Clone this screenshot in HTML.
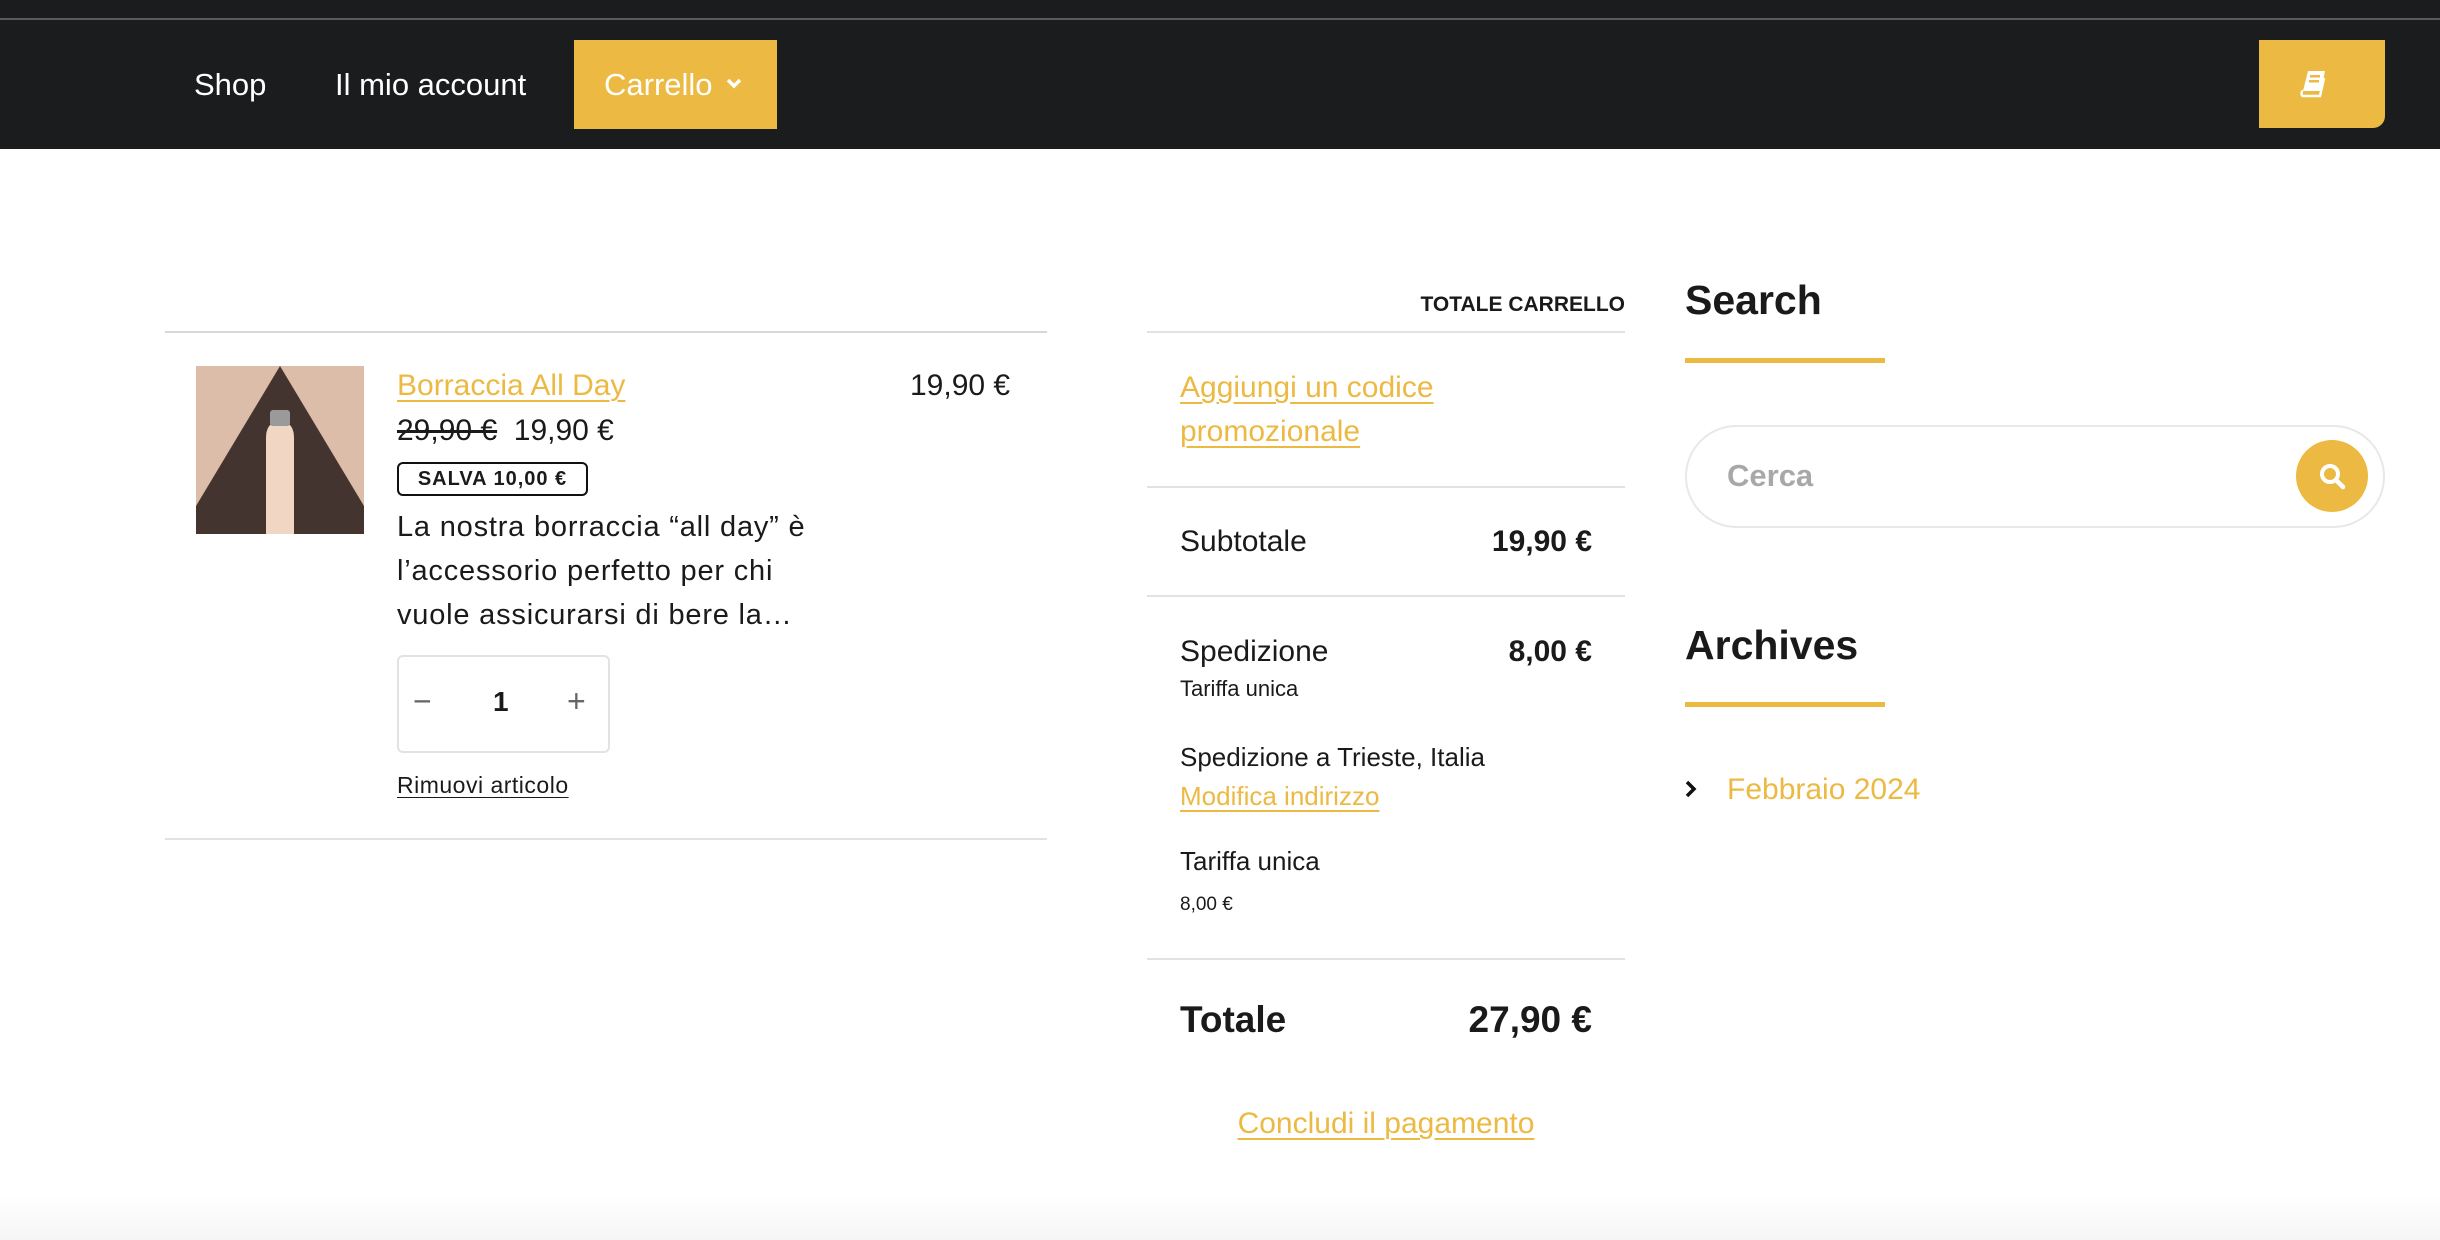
<!DOCTYPE html>
<html><head><meta charset="utf-8"><style>
*{margin:0;padding:0;box-sizing:border-box}
body{width:2440px;height:1240px;overflow:hidden;background:#fff;font-family:"Liberation Sans",sans-serif;color:#1a1a1a;position:relative}
.a{position:absolute;white-space:nowrap}
.y{color:#ecb942}
.u{text-decoration:underline;text-underline-offset:5px;text-decoration-thickness:2px}
.ln{position:absolute;height:2px;background:#e2e2e2}
</style></head><body>
<div class="a" style="left:0;top:0;width:2440px;height:149px;background:#1b1c1e"></div>
<div class="a" style="left:0;top:18px;width:2440px;height:2px;background:#5a5b5e"></div>
<div class="a" style="left:194px;top:67px;font-size:31px;color:#fff">Shop</div>
<div class="a" style="left:335px;top:67px;font-size:31px;color:#fff">Il mio account</div>
<div class="a" style="left:574px;top:40px;width:203px;height:89px;background:#ecb942"></div>
<div class="a" style="left:604px;top:67px;font-size:31px;color:#fff">Carrello</div>
<svg class="a" style="left:725px;top:77px" width="18" height="14" viewBox="0 0 18 14"><path d="M3 3l6 6 6-6" stroke="#fff" stroke-width="3.5" fill="none"/></svg>
<div class="a" style="left:2259px;top:40px;width:126px;height:88px;background:#ecb942;border-bottom-right-radius:12px"></div>
<svg class="a" style="left:2299px;top:69px" width="30" height="30" viewBox="0 0 30 30"><path d="M9 2h17l-4 20H4z" fill="#fff"/><path d="M4 22c-2 0-2 5 0 5h17l4-18" stroke="#fff" stroke-width="2.5" fill="none"/><rect x="11" y="6" width="10" height="2.5" fill="#ecb942"/><rect x="10" y="11" width="10" height="2.5" fill="#ecb942"/></svg>

<div class="ln" style="left:165px;top:331px;width:882px;background:#d8d8d8"></div>
<svg class="a" style="left:196px;top:366px" width="168" height="168" viewBox="0 0 168 168"><rect width="168" height="168" fill="#dcbdaa"/><path d="M84 0L0 140V168H168V140z" fill="#433430"/><path d="M70 168V72q0-14 10-16h8q10 2 10 16V168z" fill="#f1d6c4"/><rect x="74" y="44" width="20" height="16" rx="3" fill="#9a9a9a"/></svg>
<div class="a y u" style="left:397px;top:369px;font-size:30px">Borraccia All Day</div>
<div class="a" style="left:910px;top:369px;font-size:30px">19,90 €</div>
<div class="a" style="left:397px;top:414px;font-size:30px"><s>29,90 €</s>&nbsp; 19,90 €</div>
<div class="a" style="left:397px;top:462px;width:191px;height:34px;border:2px solid #111;border-radius:6px;font-size:20px;font-weight:bold;text-align:center;line-height:30px;letter-spacing:1px">SALVA 10,00 €</div>
<div class="a" style="left:397px;top:505px;font-size:29px;line-height:44px;letter-spacing:.8px">La nostra borraccia “all day” è<br>l’accessorio perfetto per chi<br>vuole assicurarsi di bere la…</div>
<div class="a" style="left:397px;top:655px;width:213px;height:98px;border:2px solid #e2e2e2;border-radius:6px"></div>
<div class="a" style="left:413px;top:683px;font-size:32px;color:#666">−</div>
<div class="a" style="left:493px;top:686px;font-size:28px;font-weight:bold">1</div>
<div class="a" style="left:567px;top:683px;font-size:32px;color:#666">+</div>
<div class="a u" style="left:397px;top:772px;font-size:23px;text-decoration-thickness:1px;text-underline-offset:4px;letter-spacing:.5px">Rimuovi articolo</div>
<div class="ln" style="left:165px;top:838px;width:882px"></div>

<div class="a" style="left:1147px;top:293px;width:478px;text-align:right;font-size:21px;font-weight:bold">TOTALE CARRELLO</div>
<div class="ln" style="left:1147px;top:331px;width:478px"></div>
<div class="a y u" style="left:1180px;top:366px;font-size:30px;line-height:44px">Aggiungi un codice<br>promozionale</div>
<div class="ln" style="left:1147px;top:486px;width:478px"></div>
<div class="a" style="left:1180px;top:525px;font-size:30px">Subtotale</div>
<div class="a" style="left:1300px;top:525px;width:292px;text-align:right;font-size:30px;font-weight:bold">19,90 €</div>
<div class="ln" style="left:1147px;top:595px;width:478px"></div>
<div class="a" style="left:1180px;top:635px;font-size:30px">Spedizione</div>
<div class="a" style="left:1300px;top:635px;width:292px;text-align:right;font-size:30px;font-weight:bold">8,00 €</div>
<div class="a" style="left:1180px;top:676px;font-size:22px">Tariffa unica</div>
<div class="a" style="left:1180px;top:742px;font-size:26px">Spedizione a Trieste, Italia</div>
<div class="a y u" style="left:1180px;top:781px;font-size:26px">Modifica indirizzo</div>
<div class="a" style="left:1180px;top:846px;font-size:26px">Tariffa unica</div>
<div class="a" style="left:1180px;top:894px;font-size:19px">8,00 €</div>
<div class="ln" style="left:1147px;top:958px;width:478px"></div>
<div class="a" style="left:1180px;top:999px;font-size:37px;font-weight:bold">Totale</div>
<div class="a" style="left:1300px;top:999px;width:292px;text-align:right;font-size:37px;font-weight:bold">27,90 €</div>
<div class="a y u" style="left:1147px;top:1107px;width:478px;text-align:center;font-size:30px">Concludi il pagamento</div>

<div class="a" style="left:1685px;top:277px;font-size:41px;font-weight:bold">Search</div>
<div class="a" style="left:1685px;top:358px;width:200px;height:5px;background:#ecb942"></div>
<div class="a" style="left:1685px;top:425px;width:700px;height:103px;border:2px solid #e8e8e8;border-radius:52px"></div>
<div class="a" style="left:1727px;top:458px;font-size:31px;color:#a8a8a8;font-weight:bold">Cerca</div>
<div class="a" style="left:2296px;top:440px;width:72px;height:72px;border-radius:50%;background:#ecb942"></div>
<svg class="a" style="left:2318px;top:462px" width="30" height="30" viewBox="0 0 30 30"><circle cx="12" cy="12" r="8" stroke="#fff" stroke-width="4" fill="none"/><path d="M18 18l7 7" stroke="#fff" stroke-width="4.5" stroke-linecap="round"/></svg>
<div class="a" style="left:1685px;top:622px;font-size:41px;font-weight:bold">Archives</div>
<div class="a" style="left:1685px;top:702px;width:200px;height:5px;background:#ecb942"></div>
<svg class="a" style="left:1683px;top:778px" width="16" height="22" viewBox="0 0 16 22"><path d="M4 4l7 7-7 7" stroke="#111" stroke-width="3.5" fill="none"/></svg>
<div class="a y" style="left:1727px;top:773px;font-size:30px">Febbraio 2024</div>
<div class="a" style="left:0;top:1195px;width:2440px;height:45px;background:linear-gradient(#fff,#f5f5f5)"></div>
</body></html>
